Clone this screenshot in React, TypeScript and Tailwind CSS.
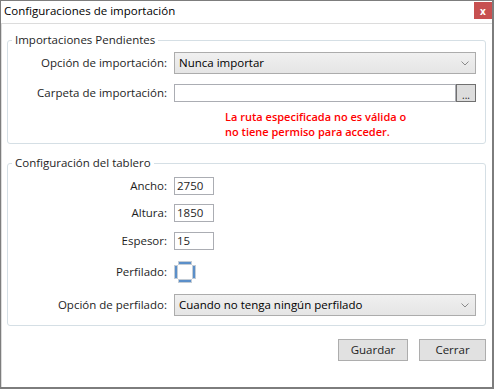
import React from "react";

const font = { fontFamily: '"Open Sans", "Noto Sans", sans-serif' };

const Chevron = () => (
  <svg width="8" height="5" viewBox="0 0 8 5" className="shrink-0">
    <path d="M0.5 0.5 L4 4 L7.5 0.5" fill="none" stroke="#8a8a8a" strokeWidth="1" />
  </svg>
);

const Combo = ({ value }: { value: string }) => (
  <div className="flex h-[22px] w-[302px] items-center justify-between border border-[#acacac] bg-gradient-to-b from-[#f0f0f0] to-[#e5e5e5] pl-[4px] pr-[6px] text-[#000]">
    <span>{value}</span>
    <Chevron />
  </div>
);

const NumInput = ({ value }: { value: string }) => (
  <div className="flex h-[18px] w-[40px] items-center border border-[#abadb3] bg-white pl-[2px] leading-none">
    {value}
  </div>
);

const Label = ({ children }: { children: React.ReactNode }) => (
  <div className="w-[160px] shrink-0 pr-[1px] text-right">{children}</div>
);

const Row = ({ label, children, className = "" }: { label: string; children: React.ReactNode; className?: string }) => (
  <div className={`flex items-center gap-[6px] ${className}`}>
    <Label>{label}</Label>
    {children}
  </div>
);

const CheckBox = () => (
  <svg width="22" height="22" viewBox="0 0 22 22">
    <rect x="4.5" y="0.5" width="13" height="3" fill="#5b8fc9" stroke="#c4cdd6" />
    <rect x="4.5" y="18.5" width="13" height="3" fill="#5b8fc9" stroke="#c4cdd6" />
    <rect x="0.5" y="4.5" width="3" height="13" fill="#5b8fc9" stroke="#c4cdd6" />
    <rect x="18.5" y="4.5" width="3" height="13" fill="#5b8fc9" stroke="#c4cdd6" />
  </svg>
);

export default function App() {
  return (
    <div
      className="flex h-[389px] w-[494px] flex-col border-t border-l border-r-2 border-b-2 border-[#7d7d7d] bg-white text-[11.5px] leading-[16px] text-[#1e1e1e]"
      style={font}
    >
      <div className="flex h-[22px] items-start justify-between">
        <span className="pl-[3px] pt-[2px] text-[11.5px] text-black">Configuraciones de importación</span>
        <div className="mt-[1px] flex h-[17px] w-[18px] items-center justify-center bg-[#c75050] text-[10px] font-bold leading-none text-white">
          x
        </div>
      </div>
      <div className="flex flex-1 flex-col border-t border-l border-[#dcdcdc] pl-[5px] pt-[8px]">
        <fieldset className="w-[479px] rounded-[3px] border border-[#d5dfe5] pb-[4px]">
          <legend className="ml-[4px] px-[3px] text-[#1e1e1e]">Importaciones Pendientes</legend>
          <Row label="Opción de importación:" className="mt-[4px]">
            <Combo value="Nunca importar" />
          </Row>
          <Row label="Carpeta de importación:" className="mt-[10px]">
            <div className="flex h-[18px] w-[302px]">
              <div className="flex-1 border border-[#abadb3] bg-white" />
              <div className="flex w-[20px] items-end justify-center border border-[#707070] bg-[#dddddd] pb-[1px] text-[10px] leading-none">
                ...
              </div>
            </div>
          </Row>
          <div className="ml-[217px] mt-[7px] text-[11px] font-semibold leading-[15px] text-[#ff0000]">
            <div>La ruta especificada no es válida o</div>
            <div>no tiene permiso para acceder.</div>
          </div>
        </fieldset>

        <fieldset className="mt-[11px] w-[479px] rounded-[3px] border border-[#d5dfe5] pb-[9px]">
          <legend className="ml-[4px] px-[3px] text-[#1e1e1e]">Configuración del tablero</legend>
          <Row label="Ancho:" className="mt-[6px]">
            <NumInput value="2750" />
          </Row>
          <Row label="Altura:" className="mt-[9px]">
            <NumInput value="1850" />
          </Row>
          <Row label="Espesor:" className="mt-[10px]">
            <NumInput value="15" />
          </Row>
          <Row label="Perfilado:" className="mt-[11px]">
            <CheckBox />
          </Row>
          <Row label="Opción de perfilado:" className="mt-[11px]">
            <Combo value="Cuando no tenga ningún perfilado" />
          </Row>
        </fieldset>

        <div className="mt-[13px] flex justify-end gap-[11px] pr-[6px]">
          <button className="h-[22px] w-[70px] border border-[#adadad] bg-[#e1e1e1] text-[#1e1e1e]">Guardar</button>
          <button className="h-[22px] w-[67px] border border-[#adadad] bg-[#e1e1e1] text-[#1e1e1e]">Cerrar</button>
        </div>
      </div>
    </div>
  );
}
